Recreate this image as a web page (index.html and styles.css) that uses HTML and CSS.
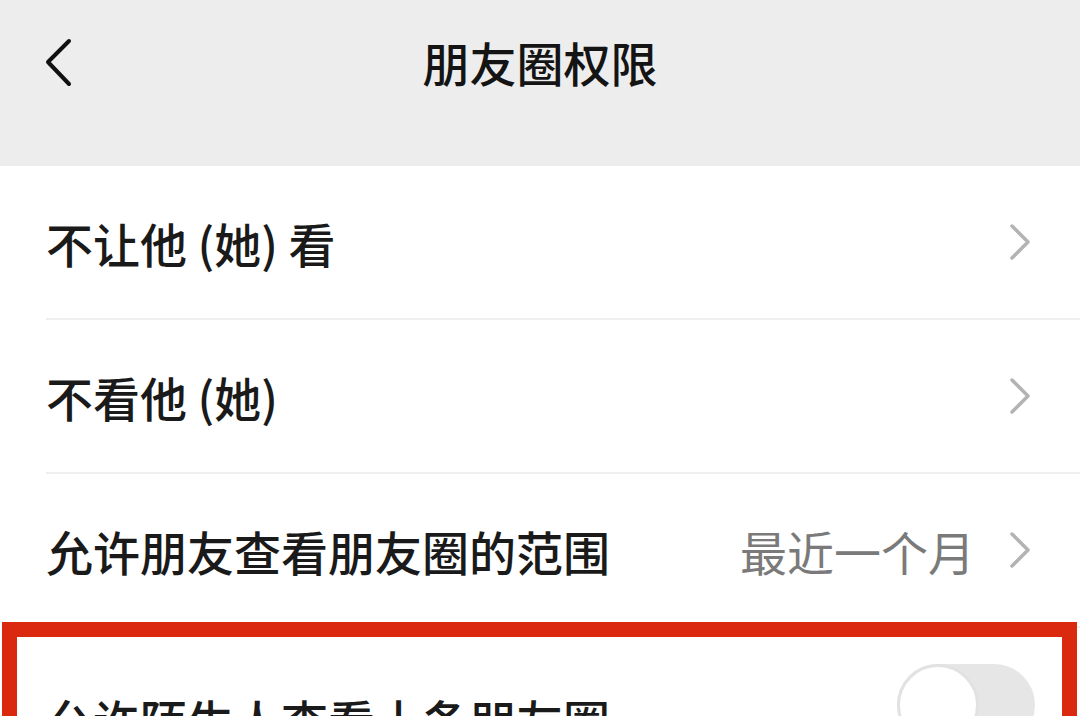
FILE: index.html
```html
<!DOCTYPE html>
<html lang="zh-CN">
<head>
<meta charset="utf-8">
<title>朋友圈权限</title>
<link rel="stylesheet" href="styles.css">
</head>
<body>
<header class="nav">
  <div class="nav-back">
    <svg width="30" height="52" viewBox="0 0 30 52" aria-hidden="true">
      <path d="M25 3 L4 24 L25 46" fill="none" stroke="#111" stroke-width="4" stroke-linecap="round" stroke-linejoin="round"/>
    </svg>
  </div>
  <h1 class="nav-title">朋友圈权限</h1>
  <div></div>
</header>
<main class="list">
  <div class="row">
    <div class="row-inner">
      <span class="label">不让他 (她) 看</span>
      <span class="chev"><svg width="22" height="38" viewBox="0 0 22 38"><path d="M3 3 L19 19 L3 35" fill="none" stroke="#b3b3b3" stroke-width="3.5" stroke-linecap="round" stroke-linejoin="round"/></svg></span>
    </div>
  </div>
  <div class="row">
    <div class="row-inner">
      <span class="label">不看他 (她)</span>
      <span class="chev"><svg width="22" height="38" viewBox="0 0 22 38"><path d="M3 3 L19 19 L3 35" fill="none" stroke="#b3b3b3" stroke-width="3.5" stroke-linecap="round" stroke-linejoin="round"/></svg></span>
    </div>
  </div>
  <div class="row">
    <div class="row-inner">
      <span class="label">允许朋友查看朋友圈的范围</span>
      <span class="value">最近一个月</span>
      <span class="chev"><svg width="22" height="38" viewBox="0 0 22 38"><path d="M3 3 L19 19 L3 35" fill="none" stroke="#b3b3b3" stroke-width="3.5" stroke-linecap="round" stroke-linejoin="round"/></svg></span>
    </div>
  </div>
  <div class="row row-marked">
    <div class="row-inner row-last">
      <span class="label">允许陌生人查看十条朋友圈</span>
      <span class="switch"><span class="knob"></span></span>
    </div>
    <div class="highlight"></div>
  </div>
</main>
</body>
</html>
```

FILE: styles.css
```css
* { box-sizing: border-box; }
html, body {
  margin: 0;
  padding: 0;
  background: #ffffff;
  font-family: "Noto Sans CJK SC", "Noto Sans", "Liberation Sans", sans-serif;
  color: #1a1a1a;
  overflow: hidden;
}
.nav {
  height: 166px;
  background: #ededed;
  display: grid;
  grid-template-columns: 1fr auto 1fr;
  align-items: start;
  padding-top: 38px;
}
.nav-back {
  padding-left: 44px;
  padding-top: 0;
  height: 52px;
}
.nav-back svg { display: block; }
.nav-title {
  margin: 0;
  font-size: 47px;
  line-height: 47px;
  font-weight: 500;
  color: #141414;
  letter-spacing: 0;
}
.list { background: #fff; }
.row {
  padding-left: 46px;
  position: relative;
}
.row-inner {
  height: 154px;
  border-bottom: 2px solid #efefef;
  display: flex;
  align-items: center;
  padding-right: 49px;
}
.label {
  flex: 1;
  font-size: 47px;
  font-weight: 500;
  color: #1a1a1a;
  white-space: nowrap;
}
.value {
  font-size: 47px;
  color: #7a7a7a;
  margin-right: 34px;
  white-space: nowrap;
}
.chev svg { display: block; }
.row-last {
  border-bottom: none;
  padding-right: 45px;
  align-items: flex-start;
  padding-top: 50px;
}
.row-last .label { margin-top: 7px; }
.switch {
  width: 138px;
  height: 82px;
  border-radius: 41px;
  background: #e6e6e6;
  position: relative;
  margin-top: -14px;
}
.knob {
  position: absolute;
  left: 0;
  top: 0;
  width: 82px;
  height: 82px;
  border-radius: 50%;
  background: #ffffff;
  border: 3px solid #e2e2e2;
}
.highlight {
  position: absolute;
  left: 2px;
  right: 3px;
  top: -6px;
  height: 220px;
  border: 15px solid #da290f;
  pointer-events: none;
}
```
